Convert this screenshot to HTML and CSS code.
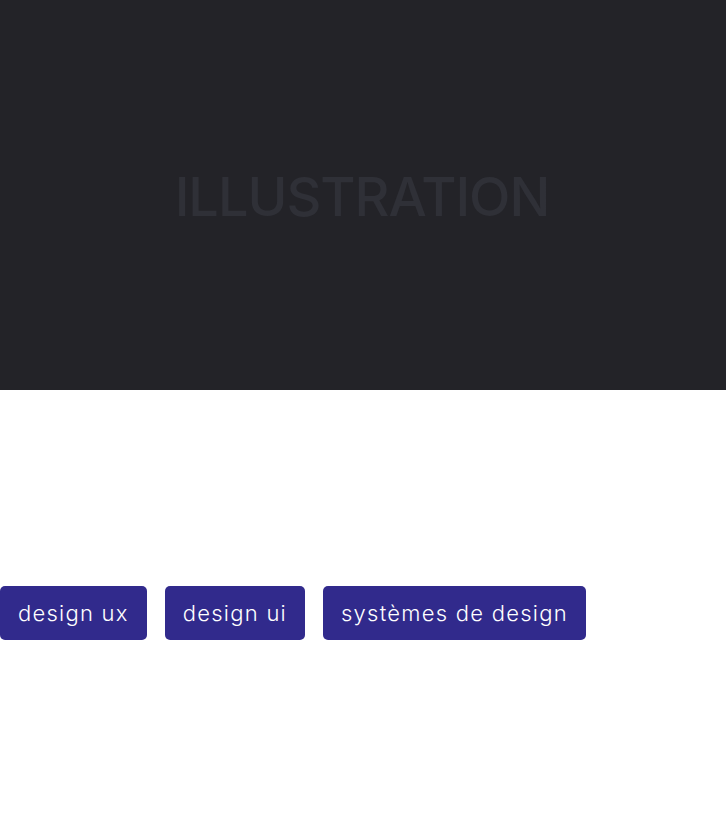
FILE: index.html
```
<!DOCTYPE html>
<html lang="fr">
<head>
<meta charset="utf-8">
<link rel="stylesheet" href="styles.css">
</head>
<body>
<div class="page">
  <div class="hero"><span class="hero-label">ILLUSTRATION</span></div>
  <ul class="tags">
    <li class="tag">design ux</li>
    <li class="tag">design ui</li>
    <li class="tag">systèmes de design</li>
  </ul>
</div>
</body>
</html>
```
FILE: styles.css
```
html, body { margin: 0; padding: 0; background: #fff; }
.page { width: 726px; font-family: Inter, "Noto Sans", sans-serif; }
.hero {
  height: 390px;
  background: #232328;
  display: flex;
  align-items: center;
  justify-content: center;
}
.hero-label {
  color: #2f3037;
  font-size: 54px;
  font-weight: 500;
  letter-spacing: -1px;
  line-height: 1;
  padding-right: 2px;
  margin-top: 4px;
}
.tags {
  list-style: none;
  margin: 196px 0 0 0;
  padding: 0;
  display: flex;
  gap: 18px;
}
.tag {
  background: #312a8c;
  color: #fff;
  border-radius: 5px;
  height: 54px;
  padding: 0 18px;
  display: flex;
  align-items: center;
  font-size: 22px;
  font-weight: 300;
  letter-spacing: 1.25px;
}
```
